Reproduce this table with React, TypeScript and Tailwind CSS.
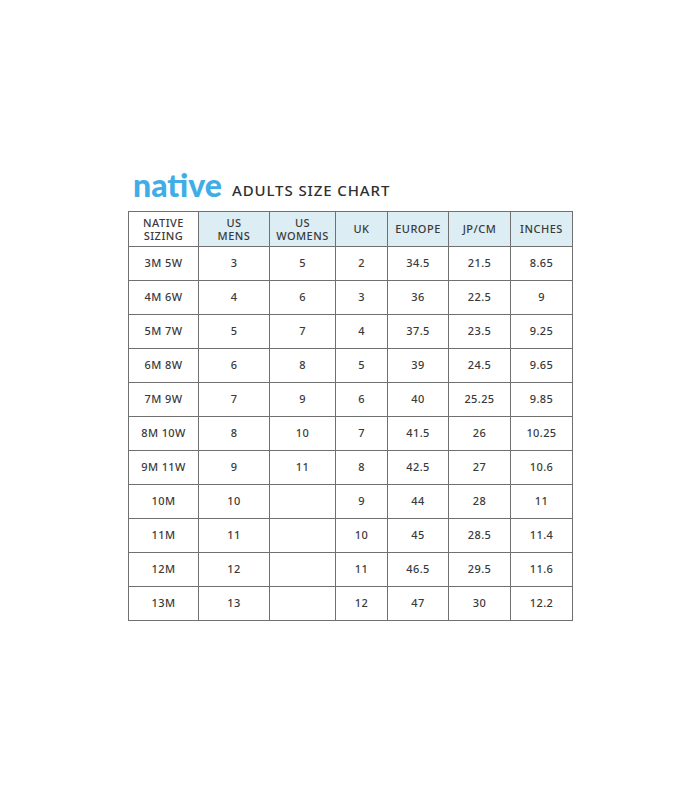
import React from "react";

const headers = [
  { label: ["NATIVE", "SIZING"], tint: false },
  { label: ["US", "MENS"], tint: true },
  { label: ["US", "WOMENS"], tint: true },
  { label: ["UK"], tint: true },
  { label: ["EUROPE"], tint: true },
  { label: ["JP/CM"], tint: true },
  { label: ["INCHES"], tint: true },
];

const widths = ["w-[70px]", "w-[71px]", "w-[66px]", "w-[52px]", "w-[61px]", "w-[62px]", "w-[62px]"];

const rows = [
  ["3M 5W", "3", "5", "2", "34.5", "21.5", "8.65"],
  ["4M 6W", "4", "6", "3", "36", "22.5", "9"],
  ["5M 7W", "5", "7", "4", "37.5", "23.5", "9.25"],
  ["6M 8W", "6", "8", "5", "39", "24.5", "9.65"],
  ["7M 9W", "7", "9", "6", "40", "25.25", "9.85"],
  ["8M 10W", "8", "10", "7", "41.5", "26", "10.25"],
  ["9M 11W", "9", "11", "8", "42.5", "27", "10.6"],
  ["10M", "10", "", "9", "44", "28", "11"],
  ["11M", "11", "", "10", "45", "28.5", "11.4"],
  ["12M", "12", "", "11", "46.5", "29.5", "11.6"],
  ["13M", "13", "", "12", "47", "30", "12.2"],
];

export default function App() {
  return (
    <div className="min-h-[800px] w-[700px] bg-white pl-[128px] pt-[169px] font-['Noto_Sans',sans-serif] text-[#3a3a3a]">
      {/* Title */}
      <div className="flex items-end gap-[10px] pl-[5px]">
        <span className="font-['Lato',sans-serif] text-[32px] font-black leading-[31px] tracking-[0px] text-[#41ade6]">
          native
        </span>
        <span className="pb-[1px] text-[15px] font-medium leading-[18px] tracking-[0.9px] text-[#2f2f2f]">
          ADULTS SIZE CHART
        </span>
      </div>

      {/* Chart */}
      <table className="mt-[11px] w-[444px] table-fixed border-collapse text-center text-[11px]">
        <thead>
          <tr className="h-[35px]">
            {headers.map((h, i) => (
              <th
                key={i}
                className={`${widths[i]} border border-[#707070] p-0 font-medium leading-[13.5px] tracking-[0.5px] ${
                  h.tint ? "bg-[#dcedf3]" : "bg-white"
                }`}
              >
                {h.label.map((l) => (
                  <div key={l}>{l}</div>
                ))}
              </th>
            ))}
          </tr>
        </thead>
        <tbody>
          {rows.map((r) => (
            <tr key={r[0]} className="h-[34px]">
              {r.map((c, i) => (
                <td key={i} className="border border-[#707070] p-0 font-medium tracking-[0.4px]">
                  {c}
                </td>
              ))}
            </tr>
          ))}
        </tbody>
      </table>
    </div>
  );
}
